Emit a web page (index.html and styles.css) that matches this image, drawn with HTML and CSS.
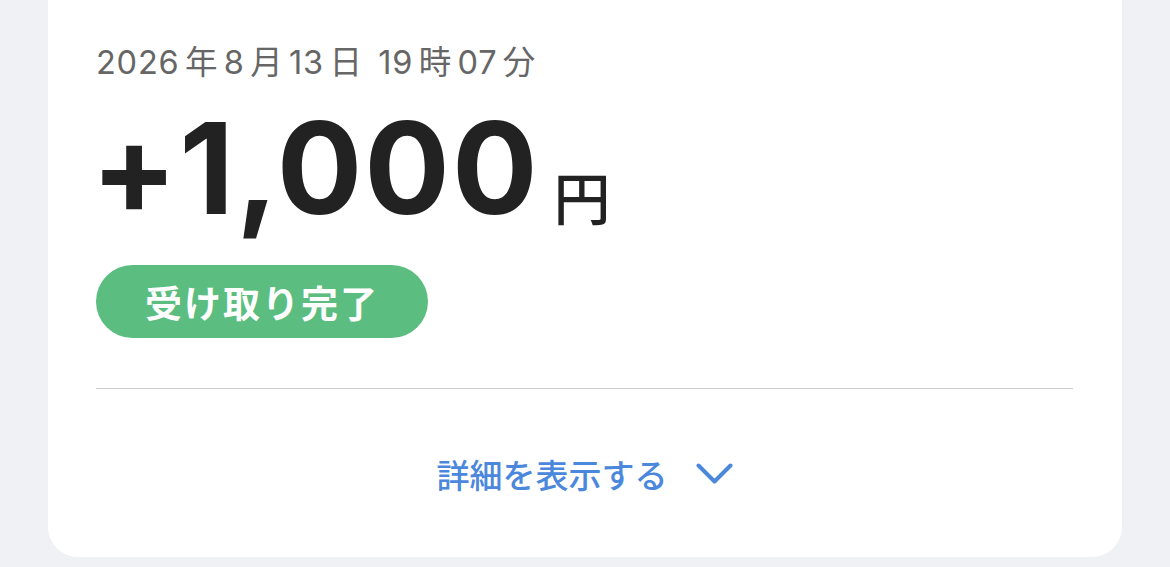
FILE: index.html
```html
<!DOCTYPE html>
<html lang="ja">
<head>
<meta charset="utf-8">
<link rel="stylesheet" href="styles.css">
</head>
<body>
<div class="card">
  <div class="date">2026<span class="k">年</span>8<span class="k">月</span>13<span class="k">日</span> 19<span class="k">時</span>07<span class="k">分</span></div>
  <div class="amount-row">
    <span class="amount">+1,000</span>
    <span class="yen">円</span>
  </div>
  <div class="badge">受け取り完了</div>
  <div class="divider"></div>
  <div class="more">
    <span class="more-text">詳細を表示する</span>
    <svg class="chev" width="37" height="22" viewBox="0 0 37 22"><path d="M2.5 2.5 L18.5 18.5 L34.5 2.5" fill="none" stroke="#4b88dc" stroke-width="4" stroke-linecap="round" stroke-linejoin="round"/></svg>
  </div>
</div>
</body>
</html>
```
FILE: styles.css
```css
html, body {
  margin: 0;
  padding: 0;
  background: #eff1f5;
  height: 100%;
}
body {
  font-family: "Inter", "Noto Sans CJK JP", sans-serif;
}
.card {
  margin-left: 48px;
  width: 1074px;
  height: 557px;
  box-sizing: border-box;
  background: #fff;
  border-radius: 0 0 30px 30px;
  padding: 43px 49px 0 48px;
  display: flex;
  flex-direction: column;
}
.date {
  font-size: 32.5px;
  line-height: 40px;
  color: #666;
  letter-spacing: 0.8px;
}
.date .k {
  padding: 0 5.5px;
}
.amount-row {
  display: flex;
  align-items: baseline;
  margin-top: 15px;
  height: 140px;
  line-height: 140px;
}
.amount {
  font-size: 127px;
  font-weight: 700;
  color: #222;
  letter-spacing: 2px;
  margin-left: -5px;
}
.yen {
  font-family: "Noto Sans CJK JP", sans-serif;
  font-size: 57px;
  font-weight: 500;
  color: #222;
  margin-left: 14px;
  position: relative;
  top: 6px;
}
.badge {
  align-self: flex-start;
  margin-top: 27px;
  width: 332px;
  height: 73px;
  box-sizing: border-box;
  border-radius: 37px;
  background: #5bbd80;
  color: #fff;
  font-family: "Noto Sans CJK JP", sans-serif;
  font-weight: 700;
  font-size: 37px;
  display: flex;
  align-items: center;
  justify-content: center;
  letter-spacing: 2px;
}
.divider {
  margin-top: 50px;
  height: 1px;
  background: #cdcdcd;
}
.more {
  display: flex;
  align-items: center;
  justify-content: center;
  margin-top: 66px;
  gap: 28px;
}
.more-text {
  font-family: "Noto Sans CJK JP", sans-serif;
  font-size: 33px;
  font-weight: 500;
  color: #4b88dc;
  line-height: 38px;
}
.chev {
  display: block;
}
```
